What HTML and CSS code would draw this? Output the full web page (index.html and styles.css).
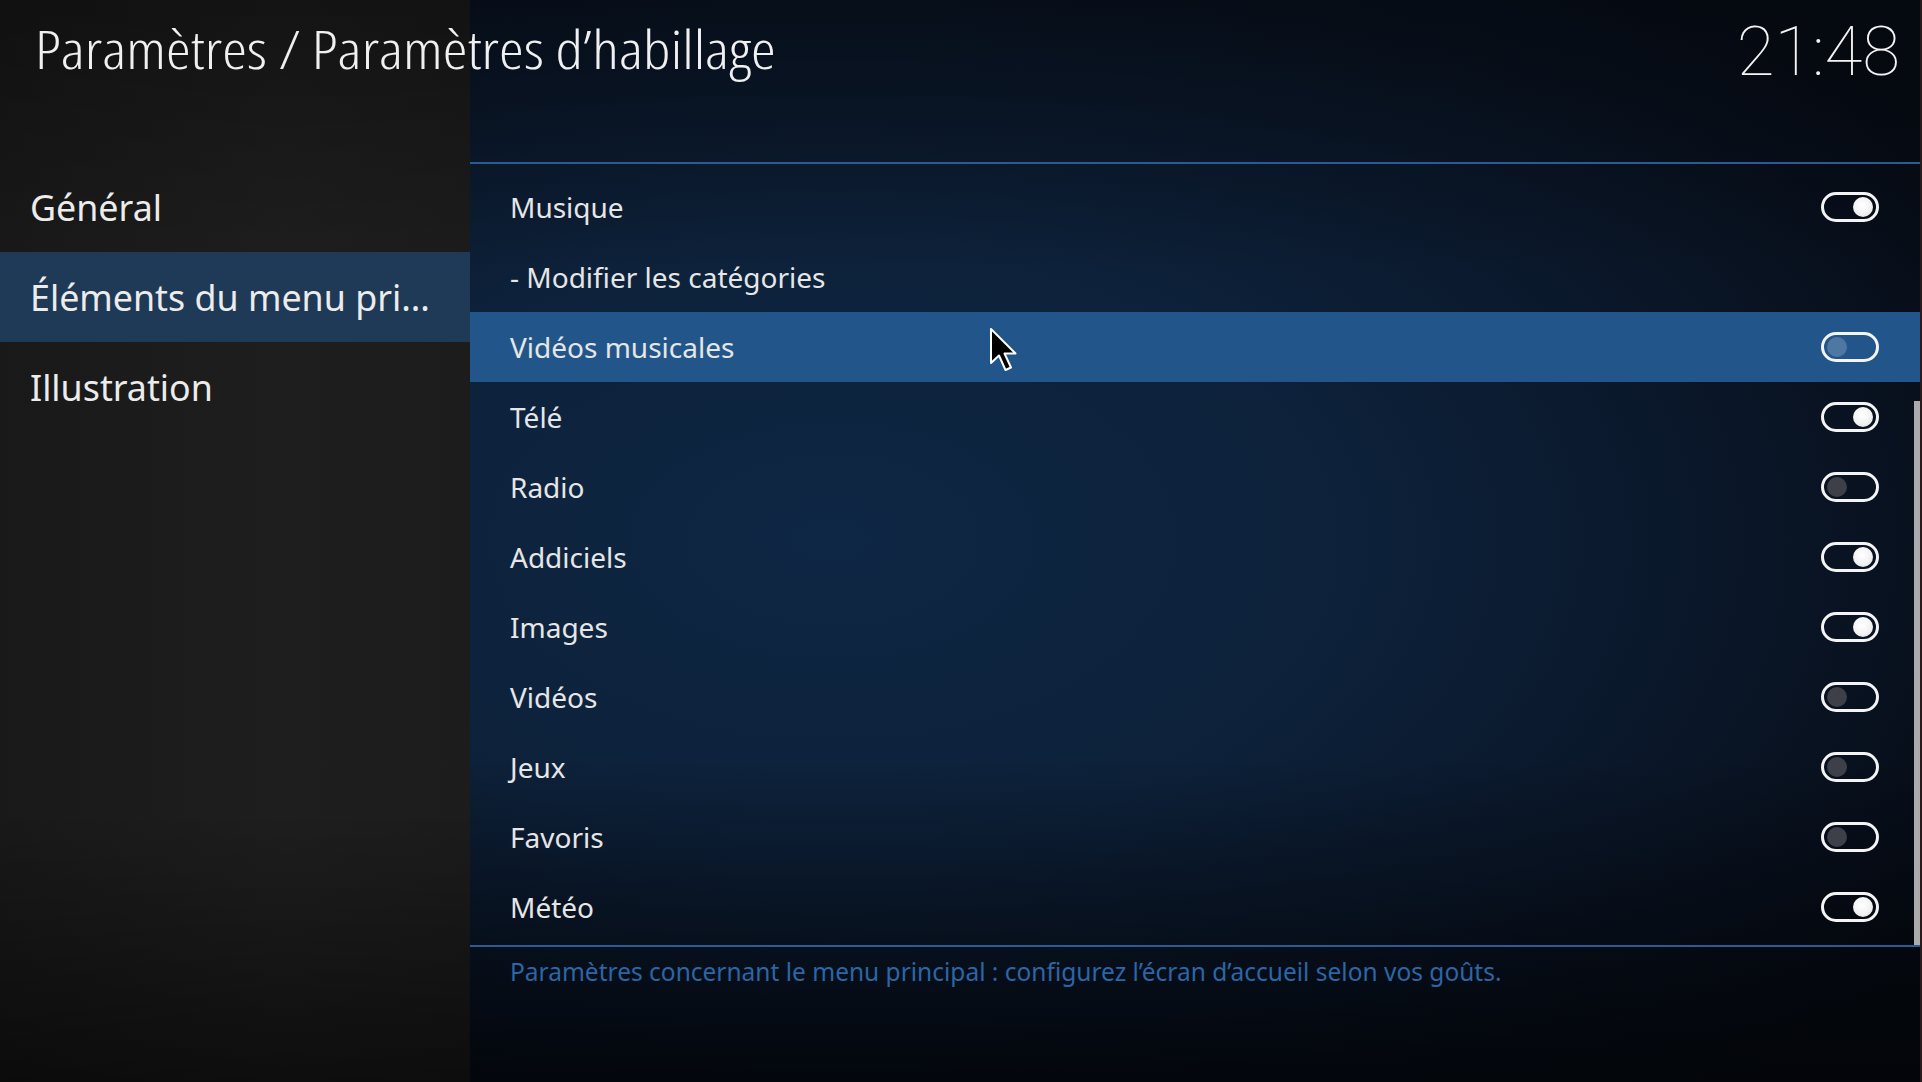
FILE: index.html
```html
<!DOCTYPE html>
<html lang="fr">
<head>
<meta charset="utf-8">
<title>Paramètres d'habillage</title>
<link rel="stylesheet" href="styles.css">
</head>
<body>
<div class="app">
  <aside class="sidebar">
    <nav class="cats">
      <div class="cat">Général</div>
      <div class="cat active">Éléments du menu pri...</div>
      <div class="cat">Illustration</div>
    </nav>
  </aside>
  <main class="panel">
    <div class="list">
      <div class="row"><span class="label">Musique</span><span class="toggle on"></span></div>
      <div class="row"><span class="label">- Modifier les catégories</span></div>
      <div class="row focus"><span class="label">Vidéos musicales</span><span class="toggle"></span></div>
      <div class="row"><span class="label">Télé</span><span class="toggle on"></span></div>
      <div class="row"><span class="label">Radio</span><span class="toggle"></span></div>
      <div class="row"><span class="label">Addiciels</span><span class="toggle on"></span></div>
      <div class="row"><span class="label">Images</span><span class="toggle on"></span></div>
      <div class="row"><span class="label">Vidéos</span><span class="toggle"></span></div>
      <div class="row"><span class="label">Jeux</span><span class="toggle"></span></div>
      <div class="row"><span class="label">Favoris</span><span class="toggle"></span></div>
      <div class="row"><span class="label">Météo</span><span class="toggle on"></span></div>
      <div class="scrollbar"></div>
    </div>
    <p class="desc">Paramètres concernant le menu principal : configurez l’écran d’accueil selon vos goûts.</p>
  </main>
  <header class="topbar">
    <h1 class="title">Paramètres / Paramètres d’habillage</h1>
    <div class="clock">21:48</div>
  </header>
  <svg class="cursor" width="30" height="46" viewBox="0 0 30 46">
    <path d="M2 2 L2 36 L10 28.5 L16.5 43 L22 40.5 L15.5 26.5 L26.5 26.5 Z" fill="#000" stroke="#fff" stroke-width="2" stroke-linejoin="round"/>
  </svg>
</div>
</body>
</html>
```
FILE: styles.css
```css
html, body {
  margin: 0;
  padding: 0;
  background: #2a1a1e;
}
body {
  width: 1922px;
  height: 1082px;
  overflow: hidden;
  font-family: "Noto Sans", "Open Sans", sans-serif;
  color: #e8e8e8;
}
.app {
  position: relative;
  width: 1920px;
  height: 1082px;
  display: grid;
  grid-template-columns: 470px 1450px;
  grid-template-rows: 162px 1fr;
  overflow: hidden;
}
.sidebar {
  grid-column: 1;
  grid-row: 1 / 3;
  padding-top: 162px;
  background:
    linear-gradient(180deg, rgba(0,0,0,0.35) 0%, rgba(0,0,0,0) 25%, rgba(0,0,0,0) 75%, rgba(0,0,0,0.55) 100%),
    linear-gradient(90deg, #191919 0%, #1e1e1e 60%, #1c1c1c 100%);
}
.cats {
  display: flex;
  flex-direction: column;
}
.cat {
  height: 90px;
  display: flex;
  align-items: center;
  padding-left: 30px;
  font-size: 35.8px;
  color: #ececec;
  white-space: nowrap;
}
.cat.active {
  background: #1f3a56;
}
.panel {
  grid-column: 2;
  grid-row: 1 / 3;
  padding-top: 162px;
  background:
    linear-gradient(180deg, rgba(4,8,14,0.55) 0%, rgba(4,8,14,0) 25%, rgba(4,8,14,0) 70%, rgba(2,4,8,0.85) 100%),
    radial-gradient(ellipse 90% 70% at 25% 50%, #0e2744 0%, #0d213a 40%, #0a1628 70%, #060a12 100%);
}
.list {
  position: relative;
  border-top: 2px solid #2a5b94;
  border-bottom: 2px solid #2a5b94;
  padding: 8px 0 3px;
}
.row {
  height: 70px;
  display: flex;
  align-items: center;
  justify-content: space-between;
  padding: 0 41px 0 40px;
}
.row.focus {
  background: #22568a;
}
.label {
  font-size: 28px;
  color: #e6e6e6;
  white-space: nowrap;
}
.toggle {
  position: relative;
  width: 52px;
  height: 24px;
  border: 3px solid #f4f4f4;
  border-radius: 15px;
}
.toggle::after {
  content: "";
  position: absolute;
  top: 2px;
  left: 3px;
  width: 20px;
  height: 20px;
  border-radius: 50%;
  background: #3d4049;
}
.toggle.on::after {
  left: auto;
  right: 3px;
  background: radial-gradient(circle at 45% 40%, #ffffff 0%, #f2f2f2 55%, #d8d8d8 100%);
}
.row.focus .toggle::after {
  background: rgba(255,255,255,0.2);
}
.scrollbar {
  position: absolute;
  right: 0;
  top: 237px;
  bottom: 0;
  width: 6px;
  background: #ababab;
}
.desc {
  margin: 0;
  padding: 8px 0 0 40px;
  font-size: 24.5px;
  color: #2b66a6;
  white-space: nowrap;
}
.topbar {
  grid-column: 1 / 3;
  grid-row: 1;
  display: flex;
  justify-content: space-between;
  align-items: flex-start;
  padding: 0 20px 0 35px;
}
.title {
  margin: 16px 0 0;
  font-family: "Open Sans", "Noto Sans", sans-serif;
  font-stretch: 75%;
  font-weight: 300;
  font-size: 54px;
  line-height: 1.2;
  color: #f0f0f0;
  white-space: nowrap;
  transform: scaleX(1.157);
  transform-origin: 0 50%;
}
.clock {
  margin-top: 7px;
  font-family: Roboto, "Noto Sans", sans-serif;
  font-weight: 100;
  font-size: 69px;
  line-height: 1.3;
  color: #f4f4f4;
}
.cursor {
  position: absolute;
  left: 989px;
  top: 327px;
}
```
